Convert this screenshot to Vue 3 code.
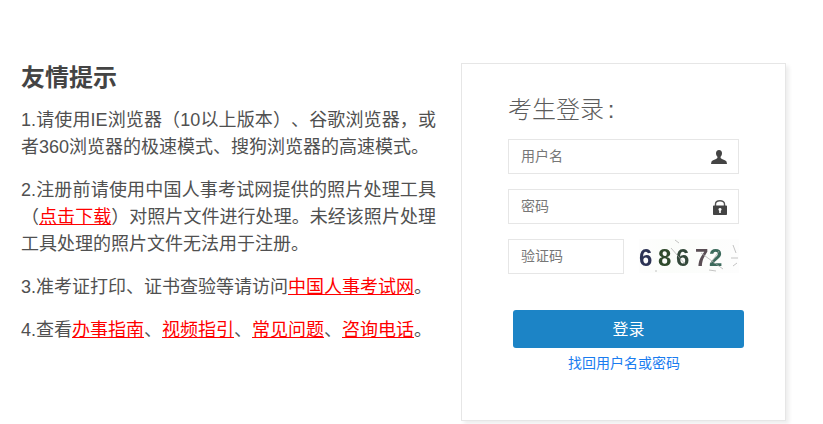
<script setup>
const notes = [
  [{ t: '1.请使用IE浏览器（10以上版本）、谷歌浏览器，或者360浏览器的极速模式、搜狗浏览器的高速模式。' }],
  [{ t: '2.注册前请使用中国人事考试网提供的照片处理工具（' }, { t: '点击下载', a: 1 }, { t: '）对照片文件进行处理。未经该照片处理工具处理的照片文件无法用于注册。' }],
  [{ t: '3.准考证打印、证书查验等请访问' }, { t: '中国人事考试网', a: 1 }, { t: '。' }],
  [{ t: '4.查看' }, { t: '办事指南', a: 1 }, { t: '、' }, { t: '视频指引', a: 1 }, { t: '、' }, { t: '常见问题', a: 1 }, { t: '、' }, { t: '咨询电话', a: 1 }, { t: '。' }]
]
</script>

<template>
  <div class="page">
    <section class="tips">
      <h2 class="tips-title">友情提示</h2>
      <p v-for="(note, i) in notes" :key="i" class="note">
        <template v-for="(part, j) in note" :key="j">
          <a v-if="part.a" href="#" class="red-link">{{ part.t }}</a>
          <template v-else>{{ part.t }}</template>
        </template>
      </p>
    </section>

    <section class="card">
      <h3 class="card-title">考生登录 :</h3>
      <div class="field">
        <span class="placeholder">用户名</span>
        <svg class="icon" viewBox="0 0 16 14" width="16" height="14">
          <path d="M8 0C6 0 5 1.400 5 3.200c0 1.500.6 2.700 1.400 3.500v1.200C5 9.400 1.500 9.800.5 11.400L0 14h16l-.5-2.600C14.500 9.800 11 9.400 9.600 7.900V6.700C10.400 5.900 11 4.700 11 3.200 11 1.400 10 0 8 0z" fill="#444" />
        </svg>
      </div>
      <div class="field">
        <span class="placeholder">密码</span>
        <svg class="icon" viewBox="0 0 14 15" width="14" height="15">
          <path d="M2.500 6V4C2.500 1.800 4.500.8 7 .8s4.500 1 4.500 3.200v2" fill="none" stroke="#555" stroke-width="1.400" />
          <path fill-rule="evenodd" d="M.8 5.500h12.400a.8.8 0 0 1 .8.8v7.900a.8.8 0 0 1-.8.8H.8a.8.8 0 0 1-.8-.8V6.300a.8.8 0 0 1 .8-.8zM7 8a1.500 1.500 0 0 0-.8 2.800V13h1.600v-2.200A1.500 1.500 0 0 0 7 8z" fill="#444" />
        </svg>
      </div>
      <div class="captcha-row">
        <div class="field captcha-input">
          <span class="placeholder">验证码</span>
        </div>
        <div class="captcha">
          <div class="digits">
            <span class="d d1">6</span>
            <span class="d d2">8</span>
            <span class="d d3">6</span>
            <span class="d d4">7</span>
            <span class="d d5">2</span>
          </div>
          <svg class="noise" viewBox="0 0 100 34" width="100" height="34">
            <g fill="none" stroke="#aaa" stroke-width="0.700">
              <path d="M32 9l14 16" />
              <path d="M36 1l4 3" />
              <path d="M62 14l22 16" />
              <path d="M72 24l8-12" />
              <path d="M70 31l7 1" />
              <path d="M94 6l3 8" />
              <path d="M92 19h7" />
              <path d="M94 27l4-3" />
              <path d="M17 31v2" />
            </g>
          </svg>
        </div>
      </div>
      <button class="submit" type="button">登录</button>
      <a href="#" class="recover">找回用户名或密码</a>
    </section>
  </div>
</template>

<style>
html, body { margin: 0; background: #fff; }
</style>

<style scoped>
.page {
  width: 823px;
  height: 424px;
  overflow: hidden;
  box-sizing: border-box;
  display: flex;
  align-items: flex-start;
  padding: 63px 0 0 21px;
  font-family: "Liberation Sans", "Noto Sans CJK SC", sans-serif;
  text-spacing-trim: space-all;
  font-kerning: none;
  color: #444;
}
.tips { width: 415px; padding-top: 1px; }
.tips-title {
  margin: 0 0 16px;
  font-size: 24px;
  line-height: 27px;
  font-weight: 700;
  color: #444;
}
.note {
  margin: 0 0 16px;
  font-size: 18px;
  line-height: 27px;
  color: #505050;
  text-align: justify;
}
.red-link { color: #f00; text-decoration: underline; }
.card {
  margin-left: 25px;
  width: 325px;
  height: 358px;
  box-sizing: border-box;
  border: 1px solid #e6e6e6;
  box-shadow: 3px 3px 4px rgba(0, 0, 0, 0.07);
  padding: 30px 46px 0;
  display: flex;
  flex-direction: column;
}
.card-title {
  margin: 0 0 13px;
  font-size: 24px;
  line-height: 32px;
  font-weight: 300;
  word-spacing: -3px;
  color: #5c5c5c;
}
.field {
  width: 231px;
  height: 35px;
  box-sizing: border-box;
  border: 1px solid #e6e6e6;
  padding: 0 11px 0 12px;
  margin-bottom: 15px;
  display: flex;
  align-items: center;
  justify-content: space-between;
}
.placeholder { font-size: 14px; color: #777; margin-bottom: 3px; }
.icon { display: block; margin-top: 1px; }
.captcha-row { display: flex; align-items: flex-start; gap: 15px; }
.captcha-input { width: 116px; margin-bottom: 0; }
.captcha {
  position: relative;
  width: 100px;
  height: 34px;
  display: flex;
  align-items: center;
  background: linear-gradient(90deg, #fdfdfd, #fbfdfa 30%, #fdfdfd);
  font-family: "Liberation Sans", sans-serif;
  font-weight: 700;
  font-size: 24px;
}
.digits { display: flex; filter: blur(0.35px); margin-top: 3px; }
.d { display: block; line-height: 27px; }
.d1 { color: #2d3355; width: 19px; }
.d2 { color: #2f4a2c; width: 18px; }
.d3 { color: #33483a; width: 19px; }
.d4 { color: #5a4e55; width: 14px; }
.d5 { color: #3c6a5c; width: 15px; }
.noise { position: absolute; left: 0; top: 0; }
.submit {
  display: block;
  margin: 36px 0 0 5px;
  width: 231px;
  height: 38px;
  border: 0;
  border-radius: 3px;
  background: #1c84c6;
  color: #fff;
  font: inherit;
  font-size: 16px;
  padding: 0 0 3px;
}
.recover {
  margin: 6px 0 0 60px;
  font-size: 14px;
  line-height: 18px;
  color: #1a7cf0;
  text-decoration: none;
}
</style>
